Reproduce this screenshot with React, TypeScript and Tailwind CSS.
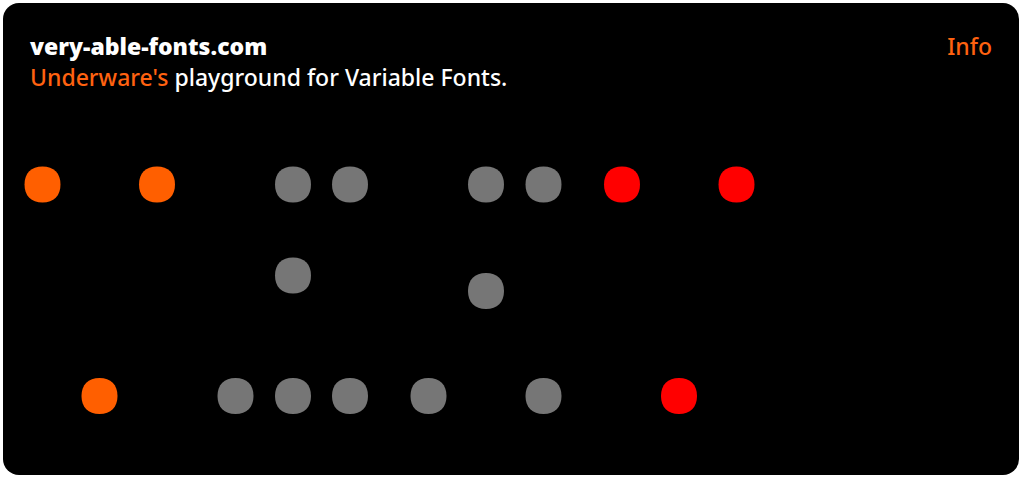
type Tone = "orange" | "gray" | "red";

type Dot = { x: number; y: number; tone: Tone };

const fills: Record<Tone, string> = {
  orange: "fill-[#ff5f00]",
  gray: "fill-[#767676]",
  red: "fill-[#ff0000]",
};

// Control points of the three letters, in the specimen's own coordinates.
const dots: Dot[] = [
  { x: 18.5, y: 18.5, tone: "orange" },
  { x: 133, y: 18.5, tone: "orange" },
  { x: 75.5, y: 230, tone: "orange" },
  { x: 269, y: 18.5, tone: "gray" },
  { x: 326, y: 18.5, tone: "gray" },
  { x: 269, y: 109.5, tone: "gray" },
  { x: 211.5, y: 230, tone: "gray" },
  { x: 269, y: 230, tone: "gray" },
  { x: 326, y: 230, tone: "gray" },
  { x: 462, y: 18.5, tone: "gray" },
  { x: 519.5, y: 18.5, tone: "gray" },
  { x: 462, y: 125, tone: "gray" },
  { x: 404.5, y: 230, tone: "gray" },
  { x: 519.5, y: 230, tone: "gray" },
  { x: 598, y: 18.5, tone: "red" },
  { x: 712.5, y: 18.5, tone: "red" },
  { x: 655, y: 230, tone: "red" },
];

const dotShape =
  "M-18 0C-18 -11.3 -11.3 -18 0 -18S18 -11.3 18 0S11.3 18 0 18S-18 11.3 -18 0Z";

function Header() {
  return (
    <header className="flex items-start justify-between gap-6 px-[27px] text-[23px] leading-[31px] font-medium">
      <div>
        <h1 className="font-black">very-able-fonts.com</h1>
        <p>
          <a href="#underware" className="text-[#ff6210]">
            Underware's
          </a>{" "}
          playground for Variable Fonts.
        </p>
      </div>
      <a href="#info" className="text-[#ff6210]">
        Info
      </a>
    </header>
  );
}

function Specimen() {
  return (
    <div className="px-[21px]">
      <svg
        viewBox="0 0 731 249"
        className="w-full max-w-[731px]"
        role="img"
        aria-label="Variable letters"
      >
        {dots.map((dot) => (
          <path
            key={`${dot.x}-${dot.y}`}
            d={dotShape}
            transform={`translate(${dot.x} ${dot.y})`}
            className={fills[dot.tone]}
          />
        ))}
      </svg>
    </div>
  );
}

export default function App() {
  return (
    <div className="min-h-screen bg-white p-[3px] font-['Noto_Sans',sans-serif]">
      <main className="flex flex-col gap-[73px] rounded-2xl bg-black pt-7 pb-[60px] text-white">
        <Header />
        <Specimen />
      </main>
    </div>
  );
}
